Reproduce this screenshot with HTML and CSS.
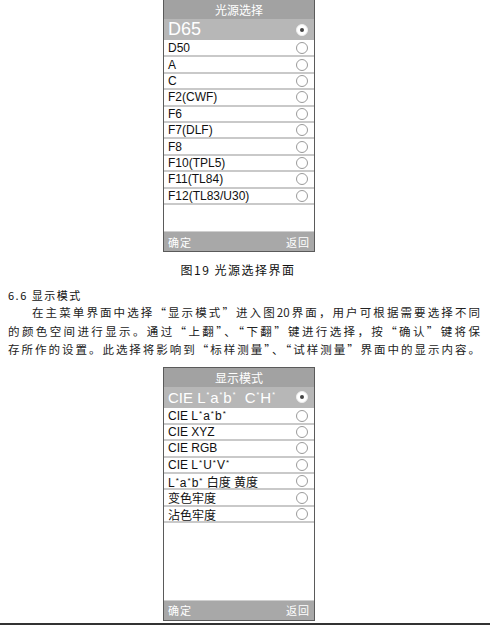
FILE: index.html
```html
<!DOCTYPE html>
<html lang="zh">
<head>
<meta charset="utf-8">
<link rel="stylesheet" href="styles.css">
</head>
<body>
<div class="page">
  <div class="screen">
    <div class="title">光源选择</div>
    <div class="row sel"><span class="big">D65</span><span class="radio on"></span></div>
    <div class="row"><span>D50</span><span class="radio"></span></div>
    <div class="row"><span>A</span><span class="radio"></span></div>
    <div class="row"><span>C</span><span class="radio"></span></div>
    <div class="row"><span>F2(CWF)</span><span class="radio"></span></div>
    <div class="row"><span>F6</span><span class="radio"></span></div>
    <div class="row"><span>F7(DLF)</span><span class="radio"></span></div>
    <div class="row"><span>F8</span><span class="radio"></span></div>
    <div class="row"><span>F10(TPL5)</span><span class="radio"></span></div>
    <div class="row"><span>F11(TL84)</span><span class="radio"></span></div>
    <div class="row"><span>F12(TL83/U30)</span><span class="radio"></span></div>
    <div class="foot"><span>确定</span><span>返回</span></div>
  </div>

  <div class="caption">图19 光源选择界面</div>
  <div class="heading">6.6 显示模式</div>
  <div class="para">
    <span class="line first">在主菜单界面中选择“显示模式”进入图20界面，用户可根据需要选择不同</span>
    <span class="line">的颜色空间进行显示。通过“上翻”、“下翻”键进行选择，按“确认”键将保</span>
    <span class="line">存所作的设置。此选择将影响到“标样测量”、“试样测量”界面中的显示内容。</span>
  </div>

  <div class="screen second">
    <div class="title">显示模式</div>
    <div class="row sel"><span class="mid">CIE L<sup>*</sup>a<sup>*</sup>b<sup>*</sup>&nbsp; C<sup>*</sup>H<sup>*</sup></span><span class="radio on"></span></div>
    <div class="row"><span>CIE L<sup>*</sup>a<sup>*</sup>b<sup>*</sup></span><span class="radio"></span></div>
    <div class="row"><span>CIE XYZ</span><span class="radio"></span></div>
    <div class="row"><span>CIE RGB</span><span class="radio"></span></div>
    <div class="row"><span>CIE L<sup>*</sup>U<sup>*</sup>V<sup>*</sup></span><span class="radio"></span></div>
    <div class="row"><span>L<sup>*</sup>a<sup>*</sup>b<sup>*</sup> 白度 黄度</span><span class="radio"></span></div>
    <div class="row"><span>变色牢度</span><span class="radio"></span></div>
    <div class="row"><span>沾色牢度</span><span class="radio"></span></div>
    <div class="foot"><span>确定</span><span>返回</span></div>
  </div>
  <div class="rule"></div>
</div>
</body>
</html>
```

FILE: styles.css
```css
html, body {
  margin: 0;
  padding: 0;
  background: #fff;
}
.page {
  width: 490px;
  height: 626px;
  overflow: hidden;
  font-family: "Liberation Sans", "Noto Sans CJK SC", sans-serif;
  color: #222;
}
.screen {
  margin-left: 163px;
  width: 150px;
  height: 251px;
  border: 1px solid #5a5a5a;
  border-top: none;
  display: flex;
  flex-direction: column;
  background: #fff;
}
.screen.second {
  margin-top: 8px;
  border-top: 1px solid #5a5a5a;
  height: 252px;
}
.title {
  height: 19px;
  background: #a2a2a2;
  color: #fff;
  font-family: "Noto Sans CJK SC", sans-serif;
  font-size: 12px;
  line-height: 19px;
  text-align: center;
}
.row {
  display: flex;
  align-items: center;
  justify-content: space-between;
  height: 14.4px;
  padding: 0 4px 0 4px;
  border-bottom: 2px solid #c9c9c9;
  font-size: 12px;
  color: #111;
  white-space: nowrap;
}
.row sup {
  font-size: 8px;
  vertical-align: 4px;
  line-height: 0;
  margin: 0 1px;
}
.row.sel {
  height: 21px;
  background: #b7b7b7;
  color: #fff;
  border-bottom: 1px solid #fff;
}
.big {
  font-size: 18px;
}
.mid {
  font-size: 15px;
}
.mid sup {
  font-size: 7px;
  vertical-align: 6px;
  margin: 0 1px;
}
.radio {
  width: 10px;
  height: 10px;
  border: 1px solid #9a9a9a;
  border-radius: 50%;
  background: #fff;
  margin-right: 2px;
  flex: none;
  display: flex;
  align-items: center;
  justify-content: center;
}
.radio.on {
  border-color: #eee;
}
.radio.on::after {
  content: "";
  width: 4px;
  height: 4px;
  border-radius: 50%;
  background: #444;
}
.foot {
  margin-top: auto;
  height: 19px;
  background: #a8a8a8;
  border-top: 1px solid #cfcfcf;
  display: flex;
  justify-content: space-between;
  align-items: center;
  padding: 0 4px;
  color: #fff;
  font-family: "Noto Sans CJK SC", sans-serif;
  font-size: 11px;
  letter-spacing: 1px;
}
.caption {
  margin-top: 9px;
  text-align: center;
  padding-right: 14px;
  font-family: "Noto Sans CJK SC", sans-serif;
  font-size: 12px;
  line-height: 18px;
  letter-spacing: 1.5px;
  color: #111;
}
.heading {
  margin-top: 8px;
  padding-left: 8px;
  font-family: "Noto Sans CJK SC", sans-serif;
  font-size: 11px;
  line-height: 16px;
  letter-spacing: 1.5px;
  color: #111;
}
.para {
  padding: 0 10px 0 8px;
  font-family: "Noto Sans CJK SC", sans-serif;
  font-size: 11.5px;
  line-height: 18.5px;
  color: #222;
}
.line {
  display: block;
  text-align: justify;
  text-align-last: justify;
  white-space: nowrap;
}
.line.first {
  padding-left: 24px;
}
.rule {
  margin-top: 2px;
  height: 2px;
  background: #333;
}
```
